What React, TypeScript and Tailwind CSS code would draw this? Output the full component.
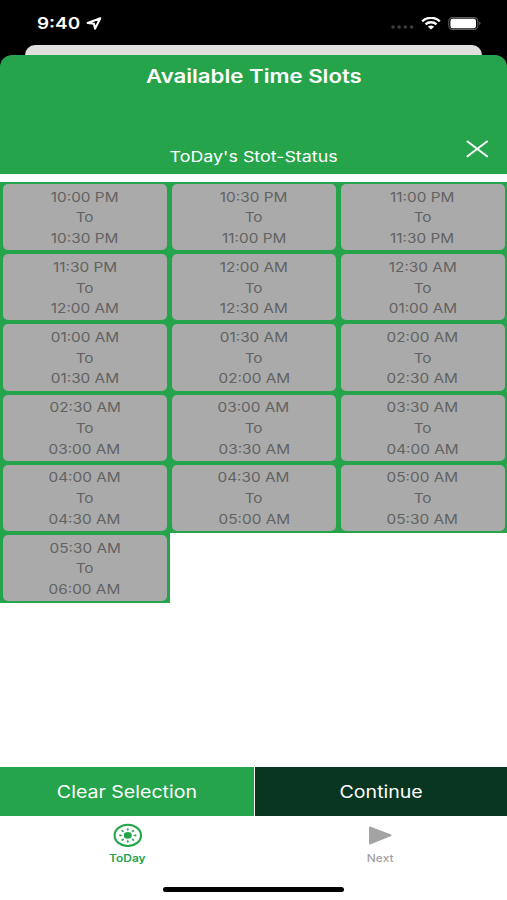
import type { ReactNode } from "react";
import clsx from "clsx";

const slots = [
  ["10:00 PM", "10:30 PM"],
  ["10:30 PM", "11:00 PM"],
  ["11:00 PM", "11:30 PM"],
  ["11:30 PM", "12:00 AM"],
  ["12:00 AM", "12:30 AM"],
  ["12:30 AM", "01:00 AM"],
  ["01:00 AM", "01:30 AM"],
  ["01:30 AM", "02:00 AM"],
  ["02:00 AM", "02:30 AM"],
  ["02:30 AM", "03:00 AM"],
  ["03:00 AM", "03:30 AM"],
  ["03:30 AM", "04:00 AM"],
  ["04:00 AM", "04:30 AM"],
  ["04:30 AM", "05:00 AM"],
  ["05:00 AM", "05:30 AM"],
  ["05:30 AM", "06:00 AM"]
];

const rays = [0, 45, 90, 135, 180, 225, 270, 315];

// Wide lettering used for every label
function Wide({ className = "scale-x-[1.18]", children }: { className?: string; children: ReactNode }) {
  return <span className={clsx("inline-block whitespace-nowrap", className)}>{children}</span>;
}

function StatusBar() {
  return (
    <div className="flex h-[45px] items-start justify-between pl-[37px] pr-[25px] pt-[15px] text-white">
      <div className="flex h-[17px] items-center">
        <Wide className="w-[36px] origin-left scale-x-[1.18] text-[16px] font-semibold leading-[17px]">9:40</Wide>
        <svg className="ml-[13px] h-[14px] w-[16px]" viewBox="0 0 16 14" fill="none" aria-hidden="true">
          <path
            d="M14.3 1.2 1.6 6 8 6.7 9 11.8Z"
            stroke="currentColor"
            strokeWidth="2"
            strokeLinejoin="round"
          />
        </svg>
      </div>
      <div className="flex h-[17px] items-center">
        <svg className="mt-[7px] h-[4px] w-[23px]" viewBox="0 0 23 4" fill="#3c3c3c" aria-hidden="true">
          <circle cx="2" cy="2" r="1.8" />
          <circle cx="8.2" cy="2" r="1.8" />
          <circle cx="14.4" cy="2" r="1.8" />
          <circle cx="20.6" cy="2" r="1.8" />
        </svg>
        <svg className="ml-[7px] h-[13px] w-[20px]" viewBox="0 0 20 13" fill="none" aria-hidden="true">
          <path d="M1.2 4.3C6-.3 14-.3 18.8 4.3" stroke="currentColor" strokeWidth="2.4" />
          <path d="M4.5 7.4c3-2.9 8-2.9 11 0" stroke="currentColor" strokeWidth="2.3" />
          <path d="M6.9 9.7c1.8-1.6 4.4-1.6 6.2 0L10 12.6Z" fill="currentColor" />
        </svg>
        <svg className="ml-[7px] h-[13px] w-[34px]" viewBox="0 0 34 13" fill="none" aria-hidden="true">
          <rect x=".8" y=".6" width="29" height="11.8" rx="3.6" stroke="#5d5d5d" strokeWidth="1.1" />
          <rect x="2.4" y="1.8" width="25.6" height="9.4" rx="2.2" fill="currentColor" />
          <path d="M31.2 4.6c1.8.6 1.8 3.2 0 3.8Z" fill="#5d5d5d" />
        </svg>
      </div>
    </div>
  );
}

function SlotCell({ from, to }: { from: string; to: string }) {
  return (
    <div className="h-[70.2px] bg-[#26a44b] pb-[2px] pl-[2.6px] pr-[2.4px] pt-[2px]">
      <button className="flex h-full w-full flex-col items-center justify-center rounded-[5px] bg-[#aaaaaa] pt-[1.2px] text-[13px] leading-[20.7px] text-[#626262]">
        <Wide>{from}</Wide>
        <Wide>To</Wide>
        <Wide>{to}</Wide>
      </button>
    </div>
  );
}

function SunIcon() {
  return (
    <svg className="h-[24px] w-[29px]" viewBox="0 0 29 24" preserveAspectRatio="none" aria-hidden="true">
      <ellipse cx="14.8" cy="12.4" rx="13.2" ry="10.6" fill="none" stroke="#26a44b" strokeWidth="2.1" />
      <g transform="translate(14.8 12.4) scale(1.2 1)" fill="#26a44b">
        <circle r="3.3" />
        {rays.map((angle) => (
          <path key={angle} d="M0-4.7 .8-6.5 0-7.2-.8-6.5Z" stroke="#26a44b" strokeWidth=".4" transform={`rotate(${angle})`} />
        ))}
      </g>
    </svg>
  );
}

export default function App() {
  return (
    <main className="flex h-[900px] w-[507px] flex-col overflow-hidden bg-white font-['Inter','Liberation_Sans',sans-serif]">
      <div className="bg-black">
        <StatusBar />
        <div className="mx-auto h-[10px] w-[457px] rounded-t-[10px] bg-[#dfdfdf]" />
        <header className="flex h-[119px] flex-col justify-between rounded-t-[12px] bg-[#26a44b] text-white">
          <h1 className="pl-px pt-[9px] text-center text-[18.5px] font-semibold leading-[24px]">
            <Wide className="scale-x-[1.2]">Available Time Slots</Wide>
          </h1>
          <div className="grid grid-cols-[60px_1fr_60px] pb-[7px]">
            <p className="col-start-2 pl-px text-center text-[15px] leading-[20px]">
              <Wide className="scale-x-[1.19]">ToDay's Stot-Status</Wide>
            </p>
            <button className="-mt-[8px] ml-[18px] flex h-[20px] w-[24px] items-center justify-center" aria-label="Close">
              <svg className="h-[18px] w-[23px]" viewBox="0 0 23 18" fill="none" aria-hidden="true">
                <path d="M1.5 1.5 21 16.3M21 1.5 1.5 16.3" stroke="white" strokeWidth="2" strokeLinecap="round" />
              </svg>
            </button>
          </div>
        </header>
      </div>

      <section className="mt-[8px] grid grid-cols-[169.5px_168.5px_169px]">
        {slots.map(([from, to]) => (
          <SlotCell key={from} from={from} to={to} />
        ))}
      </section>

      <div className="mt-auto grid h-[49px] shrink-0 grid-cols-[253.5px_1fr] gap-[1.5px] text-[17px] text-white">
        <button className="bg-[#26a44b] pt-[2px]">
          <Wide className="scale-x-[1.15]">Clear Selection</Wide>
        </button>
        <button className="bg-[#083621] pt-[2px]">
          <Wide className="scale-x-[1.15]">Continue</Wide>
        </button>
      </div>

      <nav className="grid h-[71px] shrink-0 grid-cols-2 pt-[7px] text-[10px]">
        <button className="flex flex-col items-center justify-start pl-px font-semibold leading-[14px] text-[#26a44b]">
          <SunIcon />
          <Wide className="mt-[4px] scale-x-[1.2]">ToDay</Wide>
        </button>
        <button className="flex flex-col items-center justify-start font-medium leading-[14px] text-[#a3a3a3]">
          <svg className="h-[24px] w-[24px]" viewBox="0 0 24 24" aria-hidden="true">
            <path d="M1.8 4.3 22.8 12.3 1.8 20.8Z" fill="#a3a3a3" stroke="#a3a3a3" strokeWidth="1.5" strokeLinejoin="round" />
          </svg>
          <Wide className="mt-[4px] scale-x-[1.2]">Next</Wide>
        </button>
      </nav>
      <div className="mb-[8px] ml-[163px] h-[5px] w-[181px] shrink-0 rounded-full bg-black" />
    </main>
  );
}
